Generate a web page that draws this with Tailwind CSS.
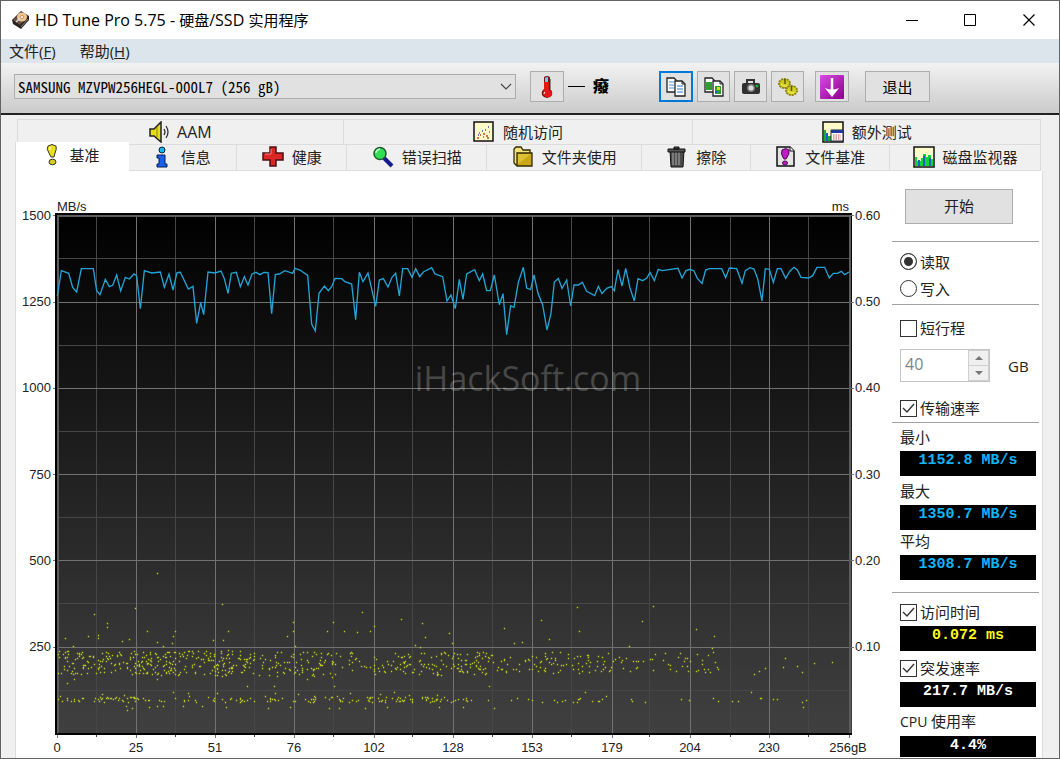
<!DOCTYPE html>
<html lang="zh-CN">
<head>
<meta charset="utf-8">
<title>HD Tune Pro 5.75</title>
<script src="https://cdn.jsdelivr.net/npm/@tailwindcss/browser@4"></script>
</head>
<body class="font-['Open_Sans','Noto_Sans_CJK_SC',sans-serif] text-[15px] leading-5 text-black">
<div class="flex min-h-screen flex-col border border-[#636363] bg-[#f0f0f0]">

  <header class="flex h-[38px] items-center bg-white pl-2.5">
    <svg class="mr-1 h-5 w-5" viewBox="0 0 20 20"><path d="M1 10 10 1l8 5v4l-8 9-8-5z" fill="#2b211d"/><path d="M2 10 10 2l7 4-8 9z" fill="#6b5245"/><ellipse cx="11" cy="7" rx="5" ry="4.500" fill="#f0c490"/><ellipse cx="11" cy="7" rx="1.800" ry="1.500" fill="#fff3e0" stroke="#a06a40" stroke-width=".6"/><path d="m5 12 4-4" stroke="#ddd" stroke-width="1.500"/><path d="m10 17 7-8" stroke="#888"/></svg>
    <h1 class="flex-1 text-[15px] font-['Open_Sans','Noto_Sans_CJK_SC',sans-serif]"><span class="text-[16px]">HD Tune Pro 5.75 - </span>硬盘<span class="text-[16px]">/SSD </span>实用程序</h1>
    <button aria-label="最小化" class="flex h-full w-[58px] items-center justify-center"><svg class="h-3 w-3" viewBox="0 0 12 12"><path d="M0 6.500h12" stroke="#000"/></svg></button>
    <button aria-label="最大化" class="flex h-full w-[58px] items-center justify-center"><svg class="h-3 w-3" viewBox="0 0 12 12"><path d="M.5.500h11v11H.5z" fill="none" stroke="#000"/></svg></button>
    <button aria-label="关闭" class="flex h-full w-[60px] items-center justify-center"><svg class="h-3 w-3" viewBox="0 0 12 12"><path d="m.5.500 11 11m0-11-11 11" stroke="#000" stroke-width="1.200"/></svg></button>
  </header>

  <nav class="flex h-6 items-center gap-6 bg-[#dce4ec] pl-2 text-[#222]">
    <button>文件(<u>F</u>)</button>
    <button>帮助(<u>H</u>)</button>
  </nav>

  <div class="flex h-[52px] items-start border-b-2 border-[#222] bg-linear-to-b from-[#f2f2f2] to-[#cbcbcb] pl-[13px] pt-2">
    <div class="relative mt-[3px] w-[502px]">
      <select aria-label="硬盘" class="h-[25px] w-full appearance-none border border-[#adadad] bg-[#e1e1e1] pl-[3px] font-['Noto_Sans_Mono_CJK_SC','Liberation_Mono',monospace] text-[15px] leading-5"><option>SAMSUNG MZVPW256HEGL-000L7 (256 gB)</option></select>
      <svg class="pointer-events-none absolute right-1 top-2 h-2.5 w-3" viewBox="0 0 12 10"><path d="m1 2 5 5 5-5" fill="none" stroke="#444" stroke-width="1.200"/></svg>
    </div>
    <button aria-label="温度" class="ml-3.5 flex h-[31px] w-[34px] items-center justify-center border border-[#adadad] bg-[#e1e1e1]"><svg class="h-6 w-4" viewBox="0 0 16 24"><path d="M5 3q0-2 3-2t3 2v11q3 2 2 6-2 3-5 3t-5-3q-1-4 2-6z" fill="#7b1010"/><path d="M6 3q1-1 3-1v5H6z" fill="#5ed9e4"/><path d="M5 7h5v8q3 1 3 4-1 4-5 3-4-1-4-4 0-2 1-3z" fill="#e81717"/><path d="M6 17q-1 1-1 2" stroke="#fff" fill="none"/><path d="M11 4v10" stroke="#333"/></svg></button>
    <span class="ml-1 mt-[15px] h-px w-[17px] bg-black"></span>
    <b class="ml-2 mt-[5px] w-4 text-[16px] font-black leading-5">癈</b>
    <div class="ml-[50px] flex gap-1">
      <button aria-label="复制文本" class="flex h-[31px] w-[34px] items-center justify-center border-2 border-[#0078d7] bg-[#e1e1e1]"><svg class="h-5 w-5 shrink-0" viewBox="0 0 20 20"><path d="M1 1h7l2 2v12H1z" fill="#fff" stroke="#222" stroke-width="1.300"/><path d="M3 5h5M3 8h5M3 11h5" stroke="#4a90d9"/><path d="M9 4h7l3 3v12H9z" fill="#fff" stroke="#222" stroke-width="1.300"/><path d="M16 4v3h3" stroke="#222" fill="none"/><path d="M11 9h6M11 12h6M11 15h6" stroke="#2878cf"/></svg></button>
      <button aria-label="复制图像" class="flex h-[31px] w-[33px] items-center justify-center border border-[#adadad] bg-[#e1e1e1]"><svg class="h-5 w-5 shrink-0" viewBox="0 0 20 20"><path d="M1 1h7l2 2v12H1z" fill="#fff" stroke="#222" stroke-width="1.300"/><path d="M2 5h6v8H2z" fill="#2ba02b"/><path d="M9 4h7l3 3v12H9z" fill="#fff" stroke="#222" stroke-width="1.300"/><path d="M16 4v3h3" fill="none" stroke="#222"/><path d="M11 9h6v8h-6z" fill="#2ba02b"/><path d="M13 10h3v3h-3z" fill="#e6d722"/><path d="M11 14h2v2h-2z" fill="#2458c8"/></svg></button>
      <button aria-label="截图" class="flex h-[31px] w-[33px] items-center justify-center border border-[#adadad] bg-[#e1e1e1]"><svg class="h-5 w-5 shrink-0" viewBox="0 0 20 20"><path d="M6 6V3h7v3" fill="none" stroke="#333" stroke-width="2"/><rect x="1" y="6" width="18" height="11" rx="2" fill="#303030"/><circle cx="10" cy="11" r="4" fill="#777"/><circle cx="10" cy="11" r="2.500" fill="#ddd"/><circle cx="16" cy="9" r="1.500" fill="#18b52c"/></svg></button>
      <button aria-label="设置" class="flex h-[31px] w-[33px] items-center justify-center border border-[#adadad] bg-[#e1e1e1]"><svg class="h-5 w-5 shrink-0" viewBox="0 0 20 20"><ellipse cx="6.500" cy="6.500" rx="5.500" ry="4.500" fill="#c9c31c" stroke="#8a840e" stroke-width="2" stroke-dasharray="2 .8"/><ellipse cx="13.500" cy="13.500" rx="5.500" ry="4.500" fill="#d5cf25" stroke="#8a840e" stroke-width="2" stroke-dasharray="2 .8"/><ellipse cx="6.500" cy="6.500" rx="4.500" ry="3.500" fill="#cfc920"/><ellipse cx="13.500" cy="13.500" rx="4.500" ry="3.500" fill="#d5cf25"/><path d="M7 2v5M13.500 9v5" stroke="#5c5708" stroke-width="1.500"/><path d="M3 7q2 3 6 2M10 14q2 3 6 2" stroke="#fff66a" fill="none"/></svg></button>
    </div>
    <button aria-label="保存" class="ml-[11px] flex h-[31px] w-[34px] items-center justify-center border border-[#adadad] bg-[#e1e1e1]"><svg class="h-6 w-6 shrink-0" viewBox="0 0 24 24"><defs><linearGradient id="p" x2="1" y2="1"><stop stop-color="#d84be0"/><stop offset="1" stop-color="#8c008f"/></linearGradient></defs><rect width="24" height="24" rx="1" fill="url(#p)"/><path d="M12 3v13" stroke="#fff" stroke-width="2.500"/><path d="M5 13q7 3 14 0l-7 9z" fill="#fff"/></svg></button>
    <button class="ml-4 h-[31px] w-[65px] border border-[#adadad] bg-[#e1e1e1]">退出</button>
  </div>

  <main class="ml-3.5 mr-4 mt-1 flex flex-1 flex-col">
    <div role="tablist" class="text-[#222]">
      <div class="ml-0.5 mr-0.5 flex h-[25px]">
        <button role="tab" class="flex flex-[326] items-center justify-center gap-1.5 border-l border-t border-[#dcdcdc]"><svg class="h-[22px] w-[22px]" viewBox="0 0 22 22"><path d="M1 8h4l7-7v20l-7-6H1z" fill="#e6dc1e" stroke="#222" stroke-width="1.500"/><path d="M8 6v10" stroke="#8c850c"/><path d="M15 8q2 3 0 6M17 5q4 6 0 12" fill="none" stroke="#333" stroke-width="1.300"/></svg><span class="text-[16px]">AAM</span></button>
        <button role="tab" class="flex flex-[350] items-center justify-center gap-2 border-l border-t border-[#dcdcdc]"><svg class="h-[22px] w-[22px]" viewBox="0 0 22 22"><path d="M1 1h19v19H1z" fill="#fffbc8" stroke="#111" stroke-width="1.500"/><path d="M4 17h2m1-3h1m2-1h2m1 2h2m1-4h1M6 12h1m7 5h2M10 16h1" stroke="#d93b2b" stroke-width="1.500"/><path d="M12 9h1m2-3h1M5 14h1m3-4h1" stroke="#3048b8" stroke-width="1.500"/></svg>随机访问</button>
        <button role="tab" class="flex flex-[348] items-center justify-center gap-2 border-l border-r border-t border-[#dcdcdc]"><svg class="h-[22px] w-[22px]" viewBox="0 0 22 22"><path d="M1 1h20v20H1z" fill="#fffbc8" stroke="#111" stroke-width="1.500"/><path d="M2 9h2v3h2v3h3v5H2z" fill="#10b030"/><path d="M4 12h2v8H4z" fill="#2458c8"/><path d="M9 9h12v11H9z" fill="#fff" stroke="#223"/><path d="M9 9h12v3H9z" fill="#20379b"/><path d="M11 14h8M11 16h8M11 18h8" stroke="#d14040" stroke-dasharray="1.500 1"/></svg>额外测试</button>
      </div>
      <div class="flex h-[27px] items-end">
        <button role="tab" aria-selected="true" class="flex h-[29px] flex-[114] items-center justify-center gap-3 self-end border-l border-[#dcdcdc] bg-white pb-1"><svg class="h-[22px] w-3" viewBox="0 0 12 22"><path d="M2 2q4-3 8 0 1 3-1 7l-1 4H5L3 9Q0 5 2 2z" fill="#e9e01a" stroke="#333"/><ellipse cx="6.500" cy="18" rx="3.500" ry="2.800" fill="#d8cf12" stroke="#333"/><path d="M4 3v3" stroke="#fff"/></svg>基准</button>
        <button role="tab" class="flex h-[27px] flex-[108] items-center justify-center gap-3 border-y border-r border-[#dcdcdc] pb-px"><svg class="h-[22px] w-3.5" viewBox="0 0 14 22"><circle cx="7" cy="4" r="3" fill="#18b4f0" stroke="#123"/><path d="M2 9h8v9h2v3H2v-3h2v-6H2z" fill="#1661e8" stroke="#0b1c50"/></svg>信息</button>
        <button role="tab" class="flex h-[27px] flex-[110] items-center justify-center gap-2 border-y border-r border-[#dcdcdc] pb-px"><svg class="h-[22px] w-[22px]" viewBox="0 0 22 22"><path d="M8 1h6v6h7v7h-7v6H8v-6H1V7h7z" fill="#dc2525" stroke="#4a1111" stroke-width="1.500"/><path d="M9 3v5H3" stroke="#f78383" fill="none"/></svg>健康</button>
        <button role="tab" class="flex h-[27px] flex-[140] items-center justify-center gap-2 border-y border-r border-[#dcdcdc] pb-px"><svg class="h-[22px] w-[22px]" viewBox="0 0 22 22"><path d="m12 12 8 8" stroke="#151a90" stroke-width="4"/><circle cx="8" cy="7.500" r="6" fill="#30e050" stroke="#225a30" stroke-width="1.500"/><path d="M4 7q0-3 4-4" stroke="#c8ffd0" fill="none" stroke-width="1.500"/></svg>错误扫描</button>
        <button role="tab" class="flex h-[27px] flex-[155] items-center justify-center gap-2 border-y border-r border-[#dcdcdc] pb-px"><svg class="h-[22px] w-[22px]" viewBox="0 0 22 22"><path d="M2 3l2-2h5l2 3h7v15H4l-2-2z" fill="#f2e37c" stroke="#332b05" stroke-width="1.300"/><path d="M5 7h15v13H5z" fill="#c9a61a" stroke="#332b05" stroke-width="1.300"/><path d="M6 8h13L6 18z" fill="#dfc136"/></svg>文件夹使用</button>
        <button role="tab" class="flex h-[27px] flex-[109] items-center justify-center gap-2 border-y border-r border-[#dcdcdc] pb-px"><svg class="h-[22px] w-[22px]" viewBox="0 0 22 22"><path d="M4 4h14l-1 17H5z" fill="#4c4c4c" stroke="#111"/><path d="M7 6v13M10 6v13M13 6v13" stroke="#aaa"/><path d="M2 3h17v3H2zM8 1h5v2H8z" fill="#555" stroke="#111"/></svg>擦除</button>
        <button role="tab" class="flex h-[27px] flex-[139] items-center justify-center gap-2 border-y border-r border-[#dcdcdc] pb-px"><svg class="h-[22px] w-[22px]" viewBox="0 0 22 22"><path d="M2 1h13l4 4v15H2z" fill="#e4e4e4" stroke="#111" stroke-width="1.500"/><path d="M15 1v4h4" fill="#fff" stroke="#111"/><path d="M7 4q4-3 7 0 1 4-3 9H9Q5 8 7 4z" fill="#c21ac8" stroke="#401044"/><ellipse cx="10" cy="17" rx="2.500" ry="2" fill="#c21ac8" stroke="#401044"/></svg>文件基准</button>
        <button role="tab" class="mr-0.5 flex h-[27px] flex-[151] items-center justify-center gap-2 border-y border-r border-[#dcdcdc] pb-px"><svg class="h-[22px] w-[22px]" viewBox="0 0 22 22"><path d="M1 1h20v20H1z" fill="#fffbc8" stroke="#111" stroke-width="1.500"/><path d="M2 11h2v4h4v-3h2V8h3v3h2v-2h3v4h2v7H2z" fill="#12d23a"/><path d="M5 14h2v6H5zM10 10h2v10h-2zM16 12h2v8h-2z" fill="#1d5ec8"/></svg>磁盘监视器</button>
      </div>
    </div>

    <div class="flex flex-1 border-x border-[#dcdcdc] bg-white">
      <div class="min-w-0 flex-1">
        <svg id="chart" role="img" aria-label="传输速率与访问时间" class="block h-auto w-full font-['Liberation_Sans',sans-serif] text-[13px]" viewBox="16 171 876 586">
          <defs><linearGradient id="bg" x2="0" y2="1"><stop stop-color="#000"/><stop offset=".25" stop-color="#101010"/><stop offset=".7" stop-color="#2e2e2e"/><stop offset="1" stop-color="#404040"/></linearGradient></defs>
          <rect x="55" y="213" width="797" height="522" fill="url(#bg)"/>
          <path id="minor" stroke="#464646"/>
          <path id="major" stroke="#727272"/>
          <path d="M55 214h796M56 213v522M55 734h797" stroke="#000" stroke-width="2"/>
          <path d="M57 216h793M58 216v517M850 216v517" stroke="#5c5c5c" stroke-width="2" fill="none"/>
          <text x="528" y="391" text-anchor="middle" fill="#fff" fill-opacity=".22" class="font-['Open_Sans',sans-serif] text-[34px]">iHackSoft.com</text>
          <path id="dots" fill="#b9c81e"/>
          <polyline transform="translate(40 190) scale(.33333)" fill="none" stroke="#23a4d4" stroke-width="4" points="52,318 64,242 86,250 98,292 110,306 124,236 160,236 170,302 180,314 196,268 208,290 218,286 230,255 242,303 256,262 268,267 282,252 290,258 301,356 313,242 335,249 361,246 373,292 387,252 399,300 411,248 421,247 445,297 459,289 470,400 482,338 491,374 504,246 525,249 543,243 553,266 564,310 574,250 589,247 601,290 613,260 624,285 636,252 648,247 660,254 672,247 684,248 695,371 706,254 718,252 735,242 758,250 765,235 780,240 803,256 815,402 826,423 837,310 853,288 865,302 875,290 885,265 905,266 915,275 935,282 947,389 958,247 969,275 984,249 1007,349 1018,270 1030,266 1044,291 1056,262 1067,250 1078,318 1088,236 1103,236 1116,262 1127,236 1139,260 1150,246 1175,233 1185,252 1208,260 1221,333 1233,315 1246,356 1258,268 1269,328 1280,252 1304,239 1318,272 1328,252 1340,302 1351,302 1363,255 1378,344 1389,311 1400,434 1412,347 1422,352 1435,277 1450,232 1460,294 1472,299 1482,255 1494,310 1508,345 1521,420 1533,370 1543,276 1555,265 1566,295 1580,270 1592,348 1602,285 1615,285 1627,277 1640,304 1664,317 1675,289 1686,311 1700,295 1714,290 1723,302 1734,239 1746,288 1757,235 1770,294 1783,333 1794,266 1808,272 1820,265 1830,247 1843,272 1855,238 1867,242 1914,235 1926,264 1938,242 1950,238 1962,243 1972,265 1986,280 1997,240 2008,236 2045,236 2057,263 2068,234 2090,236 2106,280 2116,242 2130,233 2142,237 2153,266 2166,333 2176,236 2188,238 2200,277 2212,236 2223,236 2237,265 2250,243 2262,232 2272,240 2283,262 2306,264 2318,257 2331,232 2354,232 2368,264 2380,250 2392,250 2404,244 2414,254 2427,246"/>
          <g fill="#222">
            <text x="57" y="211">MB/s</text><text x="849" y="211" text-anchor="end">ms</text>
            <g text-anchor="end"><text x="51" y="220">1500</text><text x="51" y="306">1250</text><text x="51" y="392">1000</text><text x="51" y="479">750</text><text x="51" y="565">500</text><text x="51" y="651">250</text></g>
            <text x="855" y="220">0.60</text><text x="855" y="306">0.50</text><text x="855" y="392">0.40</text><text x="855" y="479">0.30</text><text x="855" y="565">0.20</text><text x="855" y="651">0.10</text>
            <g text-anchor="middle"><text x="57" y="752">0</text><text x="136" y="752">25</text><text x="215" y="752">51</text><text x="294" y="752">76</text><text x="374" y="752">102</text><text x="453" y="752">128</text><text x="532" y="752">153</text><text x="612" y="752">179</text><text x="690" y="752">204</text><text x="769" y="752">230</text><text x="848" y="752">256gB</text></g>
          </g>
        </svg>
      </div>

      <aside class="flex w-[150px] shrink-0 flex-col pr-[3px] pt-[18px] text-[#222]">
        <button class="ml-[13px] h-[35px] w-[108px] border border-[#adadad] bg-[#e1e1e1] pb-0.5">开始</button>
        <hr class="mt-[17px] border-[#a0a0a0]">
        <fieldset class="pl-2">
          <label class="mt-1.5 flex h-[27px] items-center gap-[3px]"><input type="radio" name="mode" checked class="h-[17px] w-[17px] appearance-none rounded-full border border-[#333] bg-white checked:bg-[#333] checked:shadow-[inset_0_0_0_3px_white]">读取</label>
          <label class="flex h-[27px] items-center gap-[3px]"><input type="radio" name="mode" class="h-[17px] w-[17px] appearance-none rounded-full border border-[#333] bg-white checked:bg-[#333] checked:shadow-[inset_0_0_0_3px_white]">写入</label>
        </fieldset>
        <hr class="mt-0.5 border-[#a0a0a0]">
        <label class="ml-2 mt-[13px] flex h-5 items-center gap-[3px]"><input type="checkbox" class="h-[17px] w-[17px] appearance-none border border-[#333] bg-white">短行程</label>
        <div class="ml-2 mt-[11px] flex h-[33px] items-center">
          <div class="flex h-full w-[90px] border border-[#c4c4c4]">
            <input aria-label="短行程容量" value="40" disabled class="min-w-0 flex-1 bg-white pb-1 pl-1 text-[16px] text-[#838383]">
            <div class="flex w-[21px] flex-col border border-[#d0d0d0] bg-[#f0f0f0]">
              <button aria-label="增加" class="flex flex-1 items-center justify-center border-b border-[#d0d0d0]"><svg class="h-1.5 w-2" viewBox="0 0 8 6"><path d="m0 5 4-4 4 4z" fill="#777"/></svg></button>
              <button aria-label="减少" class="flex flex-1 items-center justify-center"><svg class="h-1.5 w-2" viewBox="0 0 8 6"><path d="m0 1 4 4 4-4z" fill="#777"/></svg></button>
            </div>
          </div>
          <span class="ml-[18px]">GB</span>
        </div>
        <label class="relative ml-2 mt-4 flex h-5 items-center gap-[3px]"><input type="checkbox" checked class="peer h-[17px] w-[17px] appearance-none border border-[#333] bg-white"><svg class="pointer-events-none absolute left-0 hidden h-[17px] w-[17px] peer-checked:block" viewBox="0 0 17 17"><path d="m3 8 4 4 7-8" fill="none" stroke="#333" stroke-width="1.400"/></svg>传输速率</label>
        <hr class="mt-1 border-[#a0a0a0]">
        <dl class="px-2 pr-[3px]">
          <dt class="mt-1 h-6">最小</dt><dd class="h-[25px] bg-black text-center font-['Liberation_Mono',monospace] text-[15px] font-bold leading-5 text-[#10b4f8]">1152.8 MB/s</dd>
          <dt class="mt-[5px] h-6">最大</dt><dd class="h-[25px] bg-black text-center font-['Liberation_Mono',monospace] text-[15px] font-bold leading-5 text-[#10b4f8]">1350.7 MB/s</dd>
          <dt class="mt-[1px] h-6">平均</dt><dd class="h-[25px] bg-black text-center font-['Liberation_Mono',monospace] text-[15px] font-bold leading-5 text-[#10b4f8]">1308.7 MB/s</dd>
        </dl>
        <hr class="mt-3 border-[#a0a0a0]">
        <div class="pl-2 pr-[3px]">
          <label class="relative mt-[9px] flex h-6 items-start gap-[3px]"><input type="checkbox" checked class="peer mt-0.5 h-[17px] w-[17px] appearance-none border border-[#333] bg-white"><svg class="pointer-events-none absolute left-0 top-0.5 hidden h-[17px] w-[17px] peer-checked:block" viewBox="0 0 17 17"><path d="m3 8 4 4 7-8" fill="none" stroke="#333" stroke-width="1.400"/></svg>访问时间</label>
          <output class="block h-[25px] bg-black text-center font-['Liberation_Mono',monospace] text-[15px] font-bold leading-5 text-[#fff81c]">0.072 ms</output>
          <label class="relative mt-[7px] flex h-6 items-start gap-[3px]"><input type="checkbox" checked class="peer mt-0.5 h-[17px] w-[17px] appearance-none border border-[#333] bg-white"><svg class="pointer-events-none absolute left-0 top-0.5 hidden h-[17px] w-[17px] peer-checked:block" viewBox="0 0 17 17"><path d="m3 8 4 4 7-8" fill="none" stroke="#333" stroke-width="1.400"/></svg>突发速率</label>
          <output class="block h-[25px] bg-black text-center font-['Liberation_Mono',monospace] text-[15px] font-bold leading-5 text-white">217.7 MB/s</output>
          <p class="mt-1 h-[25px]"><span class="text-[14px]">CPU </span>使用率</p>
          <output class="block h-[21px] bg-black text-center font-['Liberation_Mono',monospace] text-[15px] font-bold leading-5 text-white">4.4%</output>
        </div>
      </aside>
    </div>
  </main>
</div>
<script>
  // Grid lines: every other line is a major one with a tick outside the plot.
  const xs = [97,136,176,215,255,294,334,374,413,453,493,532,572,612,650,690,731,769,809];
  const ys = [258,302,345,388,431,474,517,560,603,647,690];
  let minor = '', major = '';
  xs.forEach((x, i) => { if (i % 2) major += `M${x}.5 216V738`; else minor += `M${x - 1}.5 216V737`; });
  ys.forEach((y, i) => { if (i % 2) major += `M53 ${y}.5H854`; else minor += `M57 ${y}.5H850`; });
  major += 'M53 215.5h4M850 215.500h4M57.5 733v5M849.5 733v5';
  document.getElementById('minor').setAttribute('d', minor);
  document.getElementById('major').setAttribute('d', major);

  // Access-time samples: single readings, then two dense bands.
  const pts = [157,573,222,604,135,608,94,614,107,623,107,627,147,631,175,631,228,631,293,622,293,631,287,636,333,622,362,612,327,631,344,631,357,632,370,631,374,626,401,619,422,623,449,633,425,637,65,638,88,636,98,635,98,638,122,641,129,639,157,642,172,643,173,636,213,640,223,640,163,646,73,646,295,646,415,645,420,647,449,633,
    504,628,541,620,549,639,577,607,579,631,642,621,653,606,696,629,714,636,522,642,514,643,452,643,629,646,712,648,713,652,715,662,717,667,718,669,754,674,759,671,765,668,785,658,783,667,797,666,802,672,814,663,832,662,705,672,
    67,683,74,679,157,679,247,686,274,686,334,686,332,677,307,679,489,686,585,692,751,692,606,696,602,699,
    713,698,718,701,732,701,738,701,760,698,761,698,773,699,777,699,802,702,803,707,806,700,681,699,689,700,631,699,632,701,645,702,
    126,706,127,710,132,708,149,707,157,706,163,706,183,706,202,706,226,707,268,708,290,707,329,708,339,708,365,708,387,707,439,707,463,707,494,708];
  let seed = 7;
  const rnd = () => (seed = (seed * 16807) % 2147483647) / 2147483647;
  const band = (x0, x1, n, y0, y1) => { for (let i = 0; i < n; i++) pts.push(Math.round(x0 + rnd() * (x1 - x0)), Math.round(y0 + rnd() * (y1 - y0))); };
  band(58, 180, 200, 651, 675); band(180, 240, 95, 650, 676); band(240, 320, 90, 652, 676);
  band(320, 400, 62, 652, 675); band(400, 490, 115, 652, 675); band(490, 600, 80, 652, 673);
  band(600, 710, 52, 653, 672);
  band(58, 320, 90, 697, 702); band(320, 450, 60, 696, 702); band(450, 600, 28, 698, 702); band(60, 450, 25, 692, 699);
  let dots = '';
  for (let i = 0; i < pts.length; i += 2) dots += `M${pts[i] - .2} ${pts[i + 1] - .2}h1.400v1.400h-1.400z`;
  document.getElementById('dots').setAttribute('d', dots);
</script>
</body>
</html>
